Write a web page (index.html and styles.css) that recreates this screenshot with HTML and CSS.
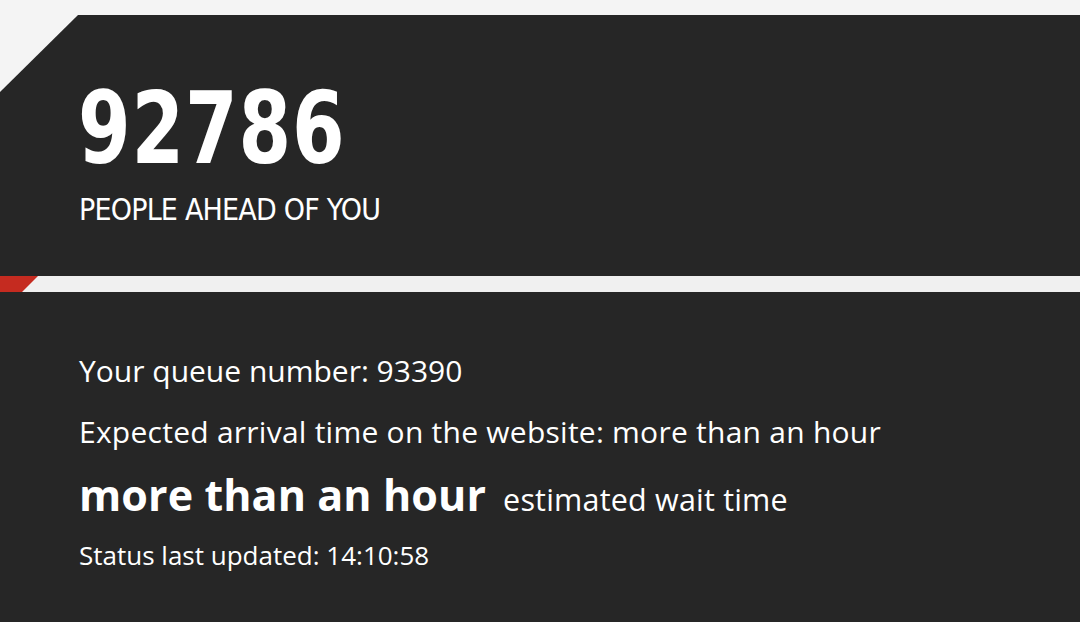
FILE: index.html
```html
<!DOCTYPE html>
<html lang="en">
<head>
<meta charset="utf-8">
<title>Queue</title>
<link rel="stylesheet" href="styles.css">
</head>
<body>
<section class="hero">
  <div class="count">92786</div>
  <div class="count-label">PEOPLE AHEAD OF YOU</div>
</section>
<div class="divider"><span class="divider-mark"></span></div>
<section class="details">
  <p class="line">Your queue number: 93390</p>
  <p class="line arrival">Expected arrival time on the website: more than an hour</p>
  <p class="wait"><strong class="wait-value">more than an hour</strong><span class="wait-label">estimated wait time</span></p>
  <p class="status">Status last updated: 14:10:58</p>
</section>
</body>
</html>
```

FILE: styles.css
```css
html, body {
  margin: 0;
  padding: 0;
}

body {
  background: #f4f4f4;
  color: #ffffff;
  font-family: "Open Sans", "Noto Sans", sans-serif;
  height: 622px;
  overflow: hidden;
  display: flex;
  flex-direction: column;
}

/* Top panel with the clipped corner */
.hero {
  margin-top: 15px;
  height: 261px;
  box-sizing: border-box;
  background: #262626;
  clip-path: polygon(78px 0, 100% 0, 100% 100%, 0 100%, 0 77px);
  padding: 64px 0 0 78px;
}

.count {
  font-family: "DejaVu Sans Condensed", "Liberation Sans", sans-serif;
  font-weight: 700;
  font-size: 99px;
  line-height: 100px;
  letter-spacing: 1px;
  transform: scaleX(0.85);
  transform-origin: 0 50%;
}

.count-label {
  font-family: "DejaVu Sans Condensed", "Liberation Sans", sans-serif;
  font-size: 30px;
  line-height: 36px;
  letter-spacing: -0.8px;
  margin-top: 13px;
  padding-left: 1px;
}

/* Light separator with the red accent */
.divider {
  height: 16px;
  background: #f0f0f0;
  display: flex;
}

.divider-mark {
  width: 38px;
  background: #c52b20;
  clip-path: polygon(0 0, 100% 0, 58% 100%, 0 100%);
}

.details {
  flex: 1;
  background: #262626;
  padding: 61px 0 0 79px;
}

.line {
  margin: 0;
  font-size: 30px;
  line-height: 36px;
}

.line + .line {
  margin-top: 25px;
}

.arrival {
  letter-spacing: 0.25px;
}

.wait {
  margin: 19px 0 0;
  display: flex;
  align-items: baseline;
  gap: 17px;
}

.wait-value {
  font-size: 43px;
  font-weight: 700;
  line-height: 52px;
  letter-spacing: 0.1px;
}

.wait-label {
  font-size: 30.5px;
  letter-spacing: 0.2px;
}

.status {
  margin: 18px 0 0;
  font-size: 26px;
  line-height: 32px;
}
```
